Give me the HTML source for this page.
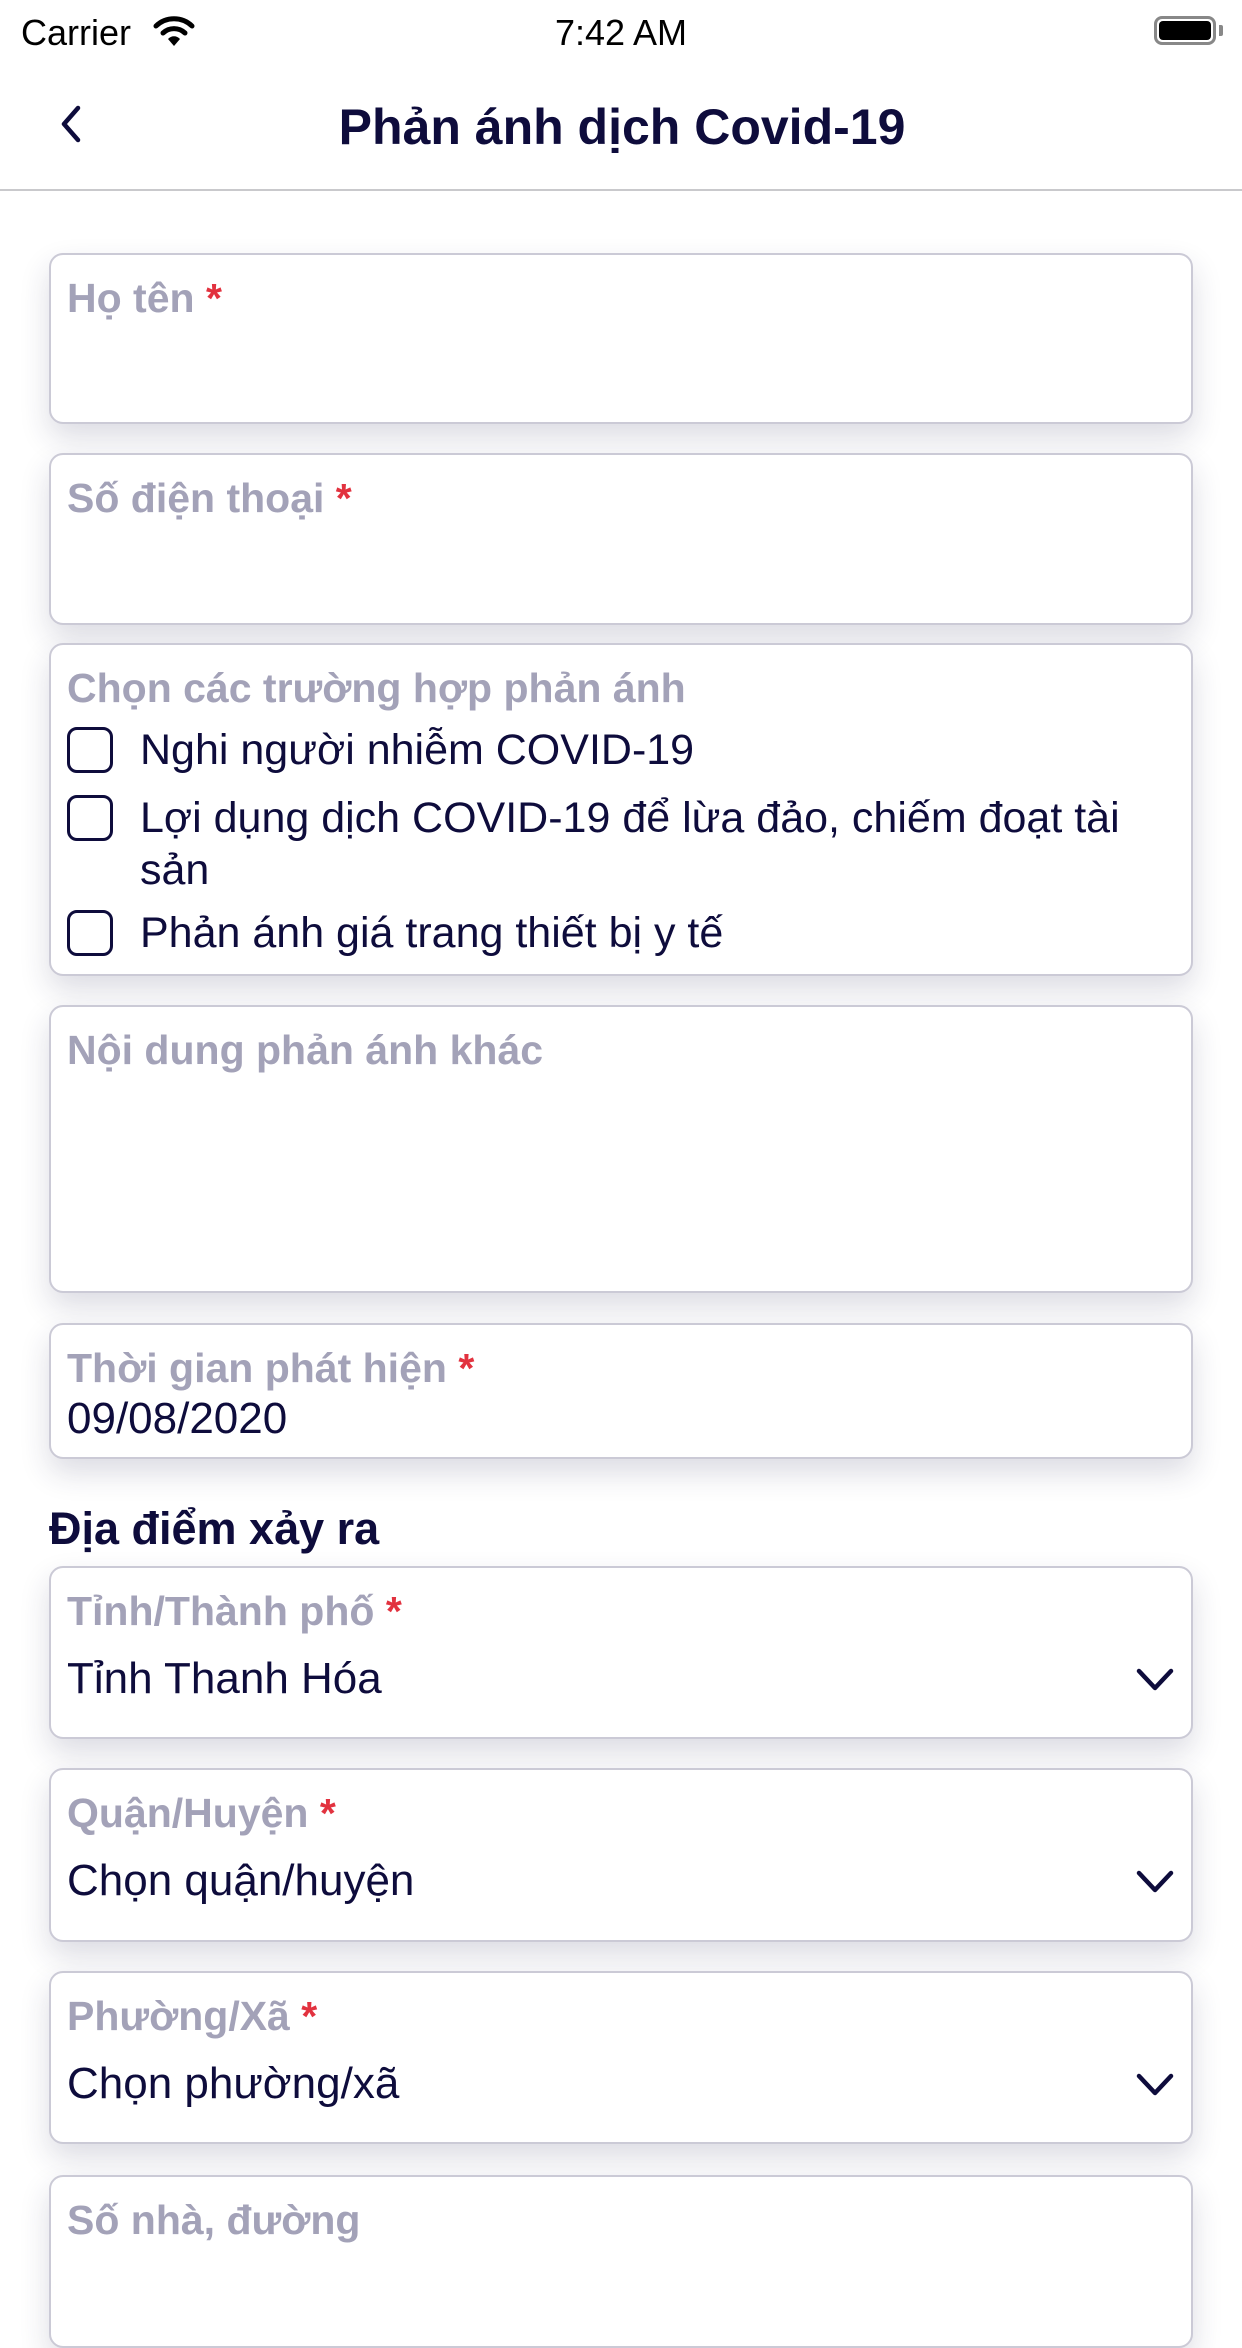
<!DOCTYPE html>
<html><head><meta charset="utf-8"><style>
*{margin:0;padding:0;box-sizing:border-box}
body{width:1242px;height:2208px;background:#fff;font-family:"Liberation Sans",sans-serif;position:relative;overflow:hidden;color:#0e0c3c}
.abs{position:absolute}
.card{position:absolute;left:49px;width:1144px;border:2px solid #cbcad6;border-radius:14px;background:#fff;box-shadow:0 14px 30px rgba(40,40,80,0.16)}
.lbl{position:absolute;left:16px;font-weight:bold;font-size:41px;color:#a3a2b8;line-height:1}
.lbl b{color:#e2323f}
.val{position:absolute;left:16px;font-size:44px;color:#0e0c3c;line-height:1}
.chev{position:absolute;right:16px;width:40px;height:26px}
.cb{position:absolute;left:16px;width:46px;height:46px;border:3px solid #0e0c3c;border-radius:10px}
.ct{position:absolute;left:89px;font-size:43px;line-height:1;color:#0e0c3c}
</style></head><body>
<div class="abs" style="left:21px;top:12px;font-size:36px;color:#000">Carrier</div>
<svg class="abs" style="left:152px;top:14px" width="44" height="34" viewBox="0 0 44 34"><path d="M4 12 A26 26 0 0 1 40 12" stroke="#000" stroke-width="5" fill="none" stroke-linecap="round"/><path d="M11 19 A16 16 0 0 1 33 19" stroke="#000" stroke-width="5" fill="none" stroke-linecap="round"/><path d="M16 25 L22 32 L28 25 A8 8 0 0 0 16 25Z" fill="#000"/></svg>
<div class="abs" style="left:0;width:1242px;top:12px;text-align:center;font-size:36px;color:#000">7:42 AM</div>
<div class="abs" style="left:1154px;top:16px;width:62px;height:29px;border:3px solid #888;border-radius:8px"></div>
<div class="abs" style="left:1159px;top:21px;width:52px;height:19px;background:#000;border-radius:4px"></div>
<div class="abs" style="left:1219px;top:25px;width:4px;height:11px;background:#888;border-radius:0 2px 2px 0"></div>

<svg class="abs" style="left:56px;top:104px" width="32" height="40" viewBox="0 0 32 40"><path d="M22 4 L8 20 L22 36" stroke="#0e0c3c" stroke-width="4.5" fill="none" stroke-linecap="round" stroke-linejoin="round"/></svg>
<div class="abs" style="left:0;width:1242px;top:98px;text-align:center;font-size:50px;font-weight:bold;color:#0e0c3c;padding-left:2px">Phản ánh dịch Covid-19</div>
<div class="abs" style="left:0;top:189px;width:1242px;height:2px;background:#c9c9cc"></div>

<div class="card" style="top:253px;height:171px"><div class="lbl" style="top:23px">Họ tên <b>*</b></div></div>
<div class="card" style="top:453px;height:172px"><div class="lbl" style="top:23px">Số điện thoại <b>*</b></div></div>
<div class="card" style="top:643px;height:333px">
<div class="lbl" style="top:23px">Chọn các trường hợp phản ánh</div>
<div class="cb" style="top:82px"></div><div class="ct" style="top:84px">Nghi người nhiễm COVID-19</div>
<div class="cb" style="top:150px"></div><div class="ct" style="top:152px">Lợi dụng dịch COVID-19 để lừa đảo, chiếm đoạt tài</div>
<div class="ct" style="top:204px">sản</div>
<div class="cb" style="top:265px"></div><div class="ct" style="top:267px">Phản ánh giá trang thiết bị y tế</div>
</div>
<div class="card" style="top:1005px;height:288px"><div class="lbl" style="top:23px">Nội dung phản ánh khác</div></div>
<div class="card" style="top:1323px;height:136px"><div class="lbl" style="top:23px">Thời gian phát hiện <b>*</b></div><div class="val" style="top:72px">09/08/2020</div></div>
<div class="abs" style="left:49px;top:1503px;font-size:45px;font-weight:bold;color:#0e0c3c">Địa điểm xảy ra</div>

<div class="card" style="top:1566px;height:173px"><div class="lbl" style="top:23px">Tỉnh/Thành phố <b>*</b></div><div class="val" style="top:89px">Tỉnh Thanh Hóa</div>
<svg class="chev" style="top:99px" viewBox="0 0 40 26"><path d="M4 4 L20 21 L36 4" stroke="#0e0c3c" stroke-width="4.5" fill="none" stroke-linecap="round" stroke-linejoin="round"/></svg></div>
<div class="card" style="top:1768px;height:174px"><div class="lbl" style="top:23px">Quận/Huyện <b>*</b></div><div class="val" style="top:89px">Chọn quận/huyện</div>
<svg class="chev" style="top:99px" viewBox="0 0 40 26"><path d="M4 4 L20 21 L36 4" stroke="#0e0c3c" stroke-width="4.5" fill="none" stroke-linecap="round" stroke-linejoin="round"/></svg></div>
<div class="card" style="top:1971px;height:173px"><div class="lbl" style="top:23px">Phường/Xã <b>*</b></div><div class="val" style="top:89px">Chọn phường/xã</div>
<svg class="chev" style="top:99px" viewBox="0 0 40 26"><path d="M4 4 L20 21 L36 4" stroke="#0e0c3c" stroke-width="4.5" fill="none" stroke-linecap="round" stroke-linejoin="round"/></svg></div>
<div class="card" style="top:2175px;height:173px"><div class="lbl" style="top:23px">Số nhà, đường</div></div>
</body></html>
